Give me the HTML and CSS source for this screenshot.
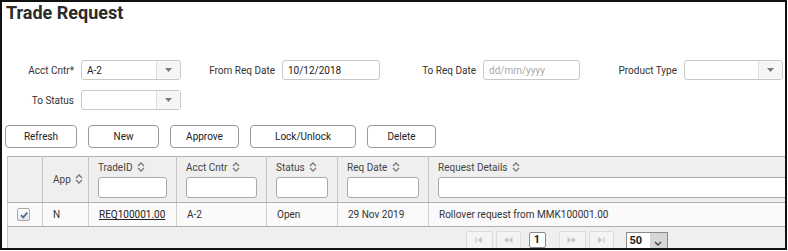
FILE: index.html
```html
<!DOCTYPE html>
<html lang="en">
<head>
    <meta charset="UTF-8">
    <title>Trade Request</title>
    <link rel="stylesheet" href="styles.css">
</head>
<body>
  <div class="frame">
    <h1 class="page-title">Trade Request</h1>

    <div class="filters">
      <label class="filter-label">Acct Cntr*</label>
      <div class="select">
        <span class="select-value">A-2</span>
        <span class="select-btn"><svg width="7" height="4" viewBox="0 0 7 4"><path d="M0 0 L7 0 L3.5 4 Z" fill="#7a7a7a"/></svg></span>
      </div>

      <label class="filter-label">From Req Date</label>
      <input class="date-input" type="text" value="10/12/2018">

      <label class="filter-label">To Req Date</label>
      <input class="date-input" type="text" placeholder="dd/mm/yyyy">

      <label class="filter-label">Product Type</label>
      <div class="select">
        <span class="select-value"></span>
        <span class="select-btn"><svg width="7" height="4" viewBox="0 0 7 4"><path d="M0 0 L7 0 L3.5 4 Z" fill="#7a7a7a"/></svg></span>
      </div>

      <label class="filter-label">To Status</label>
      <div class="select">
        <span class="select-value"></span>
        <span class="select-btn"><svg width="7" height="4" viewBox="0 0 7 4"><path d="M0 0 L7 0 L3.5 4 Z" fill="#7a7a7a"/></svg></span>
      </div>
    </div>

    <div class="toolbar">
      <button class="btn btn-refresh" type="button">Refresh</button>
      <button class="btn btn-new" type="button">New</button>
      <button class="btn btn-approve" type="button">Approve</button>
      <button class="btn btn-lock" type="button">Lock/Unlock</button>
      <button class="btn btn-delete" type="button">Delete</button>
    </div>

    <div class="grid">
      <table class="grid-table">
        <colgroup>
          <col class="col-check">
          <col class="col-app">
          <col class="col-id">
          <col class="col-acct">
          <col class="col-status">
          <col class="col-date">
          <col>
        </colgroup>
        <thead>
          <tr>
            <th></th>
            <th class="th-mid">App <svg class="sort" width="8" height="10" viewBox="0 0 8 10"><path d="M1 4 L4 1 L7 4 M1 6 L4 9 L7 6" fill="none" stroke="#777" stroke-width="1.3"/></svg></th>
            <th><div class="th-label">TradeID <svg class="sort" width="8" height="10" viewBox="0 0 8 10"><path d="M1 4 L4 1 L7 4 M1 6 L4 9 L7 6" fill="none" stroke="#777" stroke-width="1.3"/></svg></div><input class="col-filter" type="text"></th>
            <th><div class="th-label">Acct Cntr <svg class="sort" width="8" height="10" viewBox="0 0 8 10"><path d="M1 4 L4 1 L7 4 M1 6 L4 9 L7 6" fill="none" stroke="#777" stroke-width="1.3"/></svg></div><input class="col-filter" type="text"></th>
            <th><div class="th-label">Status <svg class="sort" width="8" height="10" viewBox="0 0 8 10"><path d="M1 4 L4 1 L7 4 M1 6 L4 9 L7 6" fill="none" stroke="#777" stroke-width="1.3"/></svg></div><input class="col-filter" type="text"></th>
            <th><div class="th-label">Req Date <svg class="sort" width="8" height="10" viewBox="0 0 8 10"><path d="M1 4 L4 1 L7 4 M1 6 L4 9 L7 6" fill="none" stroke="#777" stroke-width="1.3"/></svg></div><input class="col-filter" type="text"></th>
            <th><div class="th-label">Request Details <svg class="sort" width="8" height="10" viewBox="0 0 8 10"><path d="M1 4 L4 1 L7 4 M1 6 L4 9 L7 6" fill="none" stroke="#777" stroke-width="1.3"/></svg></div><input class="col-filter" type="text"></th>
          </tr>
        </thead>
        <tbody>
          <tr>
            <td class="td-check"><span class="checkbox"><svg width="10" height="10" viewBox="0 0 10 10"><path d="M2 5.2 L4.2 7.4 L8.3 2.6" fill="none" stroke="#4d6c8c" stroke-width="1.8"/></svg></span></td>
            <td>N</td>
            <td><a class="trade-link" href="#">REQ100001.00</a></td>
            <td>A-2</td>
            <td>Open</td>
            <td>29 Nov 2019</td>
            <td>Rollover request from MMK100001.00</td>
          </tr>
        </tbody>
      </table>
      <div class="grid-footer">
        <span class="pg-btn pg-first"><svg width="8" height="6" viewBox="0 0 8 6"><path d="M1 0 V6" stroke="#c4c4c4"/><path d="M7 0 L2.5 3 L7 6 Z" fill="#c4c4c4"/></svg></span>
        <span class="pg-btn pg-prev"><svg width="10" height="6" viewBox="0 0 10 6"><path d="M5 0 L1 3 L5 6 Z M9.5 0 L5.5 3 L9.5 6 Z" fill="#c4c4c4"/></svg></span>
        <span class="pg-page">1</span>
        <span class="pg-btn pg-next"><svg width="10" height="6" viewBox="0 0 10 6"><path d="M0.5 0 L4.5 3 L0.5 6 Z M5 0 L9 3 L5 6 Z" fill="#c4c4c4"/></svg></span>
        <span class="pg-btn pg-last"><svg width="8" height="6" viewBox="0 0 8 6"><path d="M1 0 L5.5 3 L1 6 Z" fill="#c4c4c4"/><path d="M7 0 V6" stroke="#c4c4c4"/></svg></span>
        <span class="pg-size"><span class="pg-size-value">50</span><span class="pg-size-btn"><svg width="8" height="5" viewBox="0 0 8 5"><path d="M1 1 L4 4 L7 1" fill="none" stroke="#444" stroke-width="1.4"/></svg></span></span>
      </div>
    </div>
  </div>
</body>
</html>
```

FILE: styles.css
```css
body {
    margin: 0;
    padding: 0;
    background-color: #fff;
    font-family: Roboto, "Liberation Sans", sans-serif;
    font-size: 10px;
    color: #333;
}
.frame {
    box-sizing: border-box;
    width: 787px;
    height: 250px;
    border: 2px solid #111;
    overflow: hidden;
}
.page-title {
    margin: 0;
    padding-left: 4px;
    font-size: 18px;
    line-height: 22px;
    font-weight: 700;
    color: #2b2b2b;
}

/* filter form */
.filters {
    display: grid;
    grid-template-columns: 67px 100px 87px 98px 89px 97px 90px 99px;
    grid-auto-rows: 20px;
    column-gap: 7px;
    row-gap: 10px;
    margin-top: 36px;
    padding-left: 5px;
    align-items: center;
}
.filter-label {
    text-align: right;
    color: #333;
    white-space: nowrap;
}
.select {
    display: flex;
    box-sizing: border-box;
    height: 20px;
    border: 1px solid #c8c8c8;
    border-radius: 3px;
    background-color: #fff;
    overflow: hidden;
}
.select-value {
    flex: 1;
    padding-left: 5px;
    line-height: 19px;
    color: #222;
}
.select-btn {
    display: flex;
    width: 23px;
    align-items: center;
    justify-content: center;
    border-left: 1px solid #e0e0e0;
    background-color: #f6f6f6;
}
.date-input {
    box-sizing: border-box;
    height: 20px;
    width: 100%;
    padding: 0 5px;
    border: 1px solid #c8c8c8;
    border-radius: 3px;
    font-family: Roboto, "Liberation Sans", sans-serif;
    font-size: 10px;
    color: #222;
}
.date-input::placeholder {
    color: #a8a8a8;
}

/* buttons */
.toolbar {
    display: flex;
    gap: 11px;
    margin-top: 15px;
    padding-left: 3px;
}
.btn {
    height: 23px;
    padding: 0;
    border: 1px solid #9a9a9a;
    border-radius: 4px;
    background-color: #fff;
    font-family: Roboto, "Liberation Sans", sans-serif;
    font-size: 10px;
    color: #222;
}
.btn-refresh { width: 72px; }
.btn-new { width: 71px; }
.btn-approve { width: 69px; }
.btn-lock { width: 106px; }
.btn-delete { width: 69px; }

/* grid */
.grid {
    width: 1118px;
    margin-top: 8px;
    margin-left: 5px;
}
.grid-table {
    width: 100%;
    border-collapse: collapse;
    table-layout: fixed;
}
.col-check { width: 35px; }
.col-app { width: 46px; }
.col-id { width: 88px; }
.col-acct { width: 90px; }
.col-status { width: 71px; }
.col-date { width: 91px; }
.grid-table th {
    height: 41px;
    padding: 0 9px 4px 9px;
    background-color: #efefef;
    border: 1px solid #c6c6c6;
    border-top-color: #b0b0b0;
    border-bottom-color: #b0b0b0;
    text-align: left;
    vertical-align: bottom;
    font-weight: 400;
    color: #444;
}
.grid-table th.th-mid {
    vertical-align: middle;
    padding: 0 0 0 10px;
}
.th-label {
    line-height: 13px;
    margin-bottom: 3px;
    white-space: nowrap;
}
.sort {
    vertical-align: -1px;
    margin-left: 2px;
}
.col-filter {
    display: block;
    box-sizing: border-box;
    width: 100%;
    height: 21px;
    border: 1px solid #aaa;
    border-radius: 3px;
    background-color: #fff;
}
.grid-table td {
    height: 23px;
    padding: 0 10px;
    background-color: #fafafa;
    border: 1px solid #d0d0d0;
    border-bottom-color: #b0b0b0;
    color: #333;
    white-space: nowrap;
}
.grid-table td.td-check {
    padding: 0 0 0 9px;
}
.checkbox {
    display: flex;
    box-sizing: border-box;
    width: 13px;
    height: 13px;
    align-items: center;
    justify-content: center;
    border: 1px solid #aaa;
    border-radius: 2px;
    background: linear-gradient(#fff, #e6e6e6);
}
.trade-link {
    color: #222;
    text-decoration: underline;
}

/* pager */
.grid-footer {
    display: flex;
    height: 26px;
    align-items: center;
    justify-content: center;
    background-color: #efefef;
    border-left: 1px solid #c6c6c6;
}
.pg-btn {
    display: flex;
    box-sizing: border-box;
    height: 18px;
    align-items: center;
    justify-content: center;
    border: 1px solid #dcdcdc;
    border-radius: 2px;
    background-color: #f4f4f4;
}
.pg-first { width: 27px; }
.pg-prev { width: 25px; margin-left: 3px; }
.pg-next { width: 27px; margin-left: 13px; }
.pg-last { width: 25px; margin-left: 3px; }
.pg-page {
    box-sizing: border-box;
    width: 17px;
    height: 16px;
    margin-left: 8px;
    border: 1px solid #8a8a8a;
    border-radius: 2px;
    background-color: #fff;
    text-align: center;
    line-height: 14px;
    font-size: 11px;
    font-weight: 700;
    color: #222;
}
.pg-size {
    display: flex;
    box-sizing: border-box;
    width: 42px;
    height: 17px;
    margin-left: 12px;
    border: 1px solid #8a8a8a;
    background-color: #fff;
}
.pg-size-value {
    flex: 1;
    padding-left: 3px;
    line-height: 15px;
    font-size: 11px;
    font-weight: 700;
    color: #222;
}
.pg-size-btn {
    display: flex;
    width: 17px;
    align-items: flex-end;
    justify-content: center;
    padding-bottom: 2px;
    box-sizing: border-box;
    background-color: #d6d6d6;
}
```
